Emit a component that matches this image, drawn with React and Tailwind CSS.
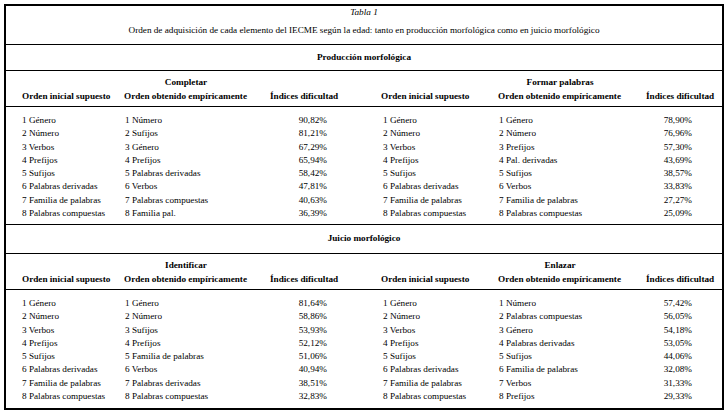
import React from "react";

const produccion = {
  title: "Producción morfológica",
  left: {
    label: "Completar",
    rows: [
      ["1 Género", "1 Número", "90,82%"],
      ["2 Número", "2 Sufijos", "81,21%"],
      ["3 Verbos", "3 Género", "67,29%"],
      ["4 Prefijos", "4 Prefijos", "65,94%"],
      ["5 Sufijos", "5 Palabras derivadas", "58,42%"],
      ["6 Palabras derivadas", "6 Verbos", "47,81%"],
      ["7 Familia de palabras", "7 Palabras compuestas", "40,63%"],
      ["8 Palabras compuestas", "8 Familia pal.", "36,39%"],
    ],
  },
  right: {
    label: "Formar palabras",
    rows: [
      ["1 Género", "1 Género", "78,90%"],
      ["2 Número", "2 Número", "76,96%"],
      ["3 Verbos", "3 Prefijos", "57,30%"],
      ["4 Prefijos", "4 Pal. derivadas", "43,69%"],
      ["5 Sufijos", "5 Sufijos", "38,57%"],
      ["6 Palabras derivadas", "6 Verbos", "33,83%"],
      ["7 Familia de palabras", "7 Familia de palabras", "27,27%"],
      ["8 Palabras compuestas", "8 Palabras compuestas", "25,09%"],
    ],
  },
};

const juicio = {
  title: "Juicio morfológico",
  left: {
    label: "Identificar",
    rows: [
      ["1 Género", "1 Género", "81,64%"],
      ["2 Número", "2 Número", "58,86%"],
      ["3 Verbos", "3 Sufijos", "53,93%"],
      ["4 Prefijos", "4 Prefijos", "52,12%"],
      ["5 Sufijos", "5 Familia de palabras", "51,06%"],
      ["6 Palabras derivadas", "6 Verbos", "40,94%"],
      ["7 Familia de palabras", "7 Palabras derivadas", "38,51%"],
      ["8 Palabras compuestas", "8 Palabras compuestas", "32,83%"],
    ],
  },
  right: {
    label: "Enlazar",
    rows: [
      ["1 Género", "1 Número", "57,42%"],
      ["2 Número", "2 Palabras compuestas", "56,05%"],
      ["3 Verbos", "3 Género", "54,18%"],
      ["4 Prefijos", "4 Palabras derivadas", "53,05%"],
      ["5 Sufijos", "5 Sufijos", "44,06%"],
      ["6 Palabras derivadas", "6 Familia de palabras", "32,08%"],
      ["7 Familia de palabras", "7 Verbos", "31,33%"],
      ["8 Palabras compuestas", "8 Prefijos", "29,33%"],
    ],
  },
};

// left half: 118 / 138 / 113, right half: 123 / 140 / 84
const HeaderHalf = ({ label, side }) => {
  const left = side === "left";
  return (
    <div className="flex font-bold leading-[13.5px]">
      <div className={left ? "w-[118px] pl-[16px]" : "w-[123px] pl-[6px]"}>
        <div>&nbsp;</div>
        <div>Orden inicial supuesto</div>
      </div>
      <div className={left ? "w-[138px]" : "w-[140px]"}>
        <div className="w-[124px] text-center">{label}</div>
        <div>Orden obtenido empíricamente</div>
      </div>
      <div className={left ? "w-[113px] pl-[8px]" : "w-[84px] pl-[8px]"}>
        <div>&nbsp;</div>
        <div>Índices dificultad</div>
      </div>
    </div>
  );
};

const DataHalf = ({ rows, side }) => {
  const left = side === "left";
  return (
    <div className="flex flex-col leading-[13.3px]">
      {rows.map((r, i) => (
        <div key={i} className="flex">
          <div className={left ? "w-[118px] pl-[16px]" : "w-[123px] pl-[8px]"}>
            {r[0]}
          </div>
          <div className={left ? "w-[138px] pl-[1px]" : "w-[140px] pl-[1px]"}>
            {r[1]}
          </div>
          <div className={left ? "w-[113px]" : "w-[84px]"}>
            <div className={left ? "w-[65px] text-right" : "w-[54px] text-right"}>
              {r[2]}
            </div>
          </div>
        </div>
      ))}
    </div>
  );
};

const Section = ({ data, titleH }) => (
  <>
    <div
      className={`flex items-center justify-center border-b border-black font-bold ${titleH}`}
    >
      {data.title}
    </div>
    <div className="flex h-[36px] border-b border-black pt-[5px]">
      <HeaderHalf label={data.left.label} side="left" />
      <HeaderHalf label={data.right.label} side="right" />
    </div>
  </>
);

export default function App() {
  return (
    <div className="bg-white w-[728px] h-[413px] pt-[4px] pl-[4px] font-[family-name:'Liberation_Serif','Times_New_Roman',serif] text-[9.2px] text-black">
      <div className="w-[720px] h-[406px] border-2 border-black flex flex-col">
        {/* title */}
        <div className="h-[39px] border-b border-black flex flex-col items-center leading-[12px]">
          <div className="italic">Tabla 1</div>
          <div className="mt-[6px]">
            Orden de adquisición de cada elemento del IECME según la edad:
            tanto en producción morfológica como en juicio morfológico
          </div>
        </div>

        <Section data={produccion} titleH="h-[26px]" />
        <div className="flex h-[118px] border-b border-black pt-[7px]">
          <DataHalf rows={produccion.left.rows} side="left" />
          <DataHalf rows={produccion.right.rows} side="right" />
        </div>

        <Section data={juicio} titleH="h-[29px]" />
        <div className="flex flex-1 pt-[7px]">
          <DataHalf rows={juicio.left.rows} side="left" />
          <DataHalf rows={juicio.right.rows} side="right" />
        </div>
      </div>
    </div>
  );
}
